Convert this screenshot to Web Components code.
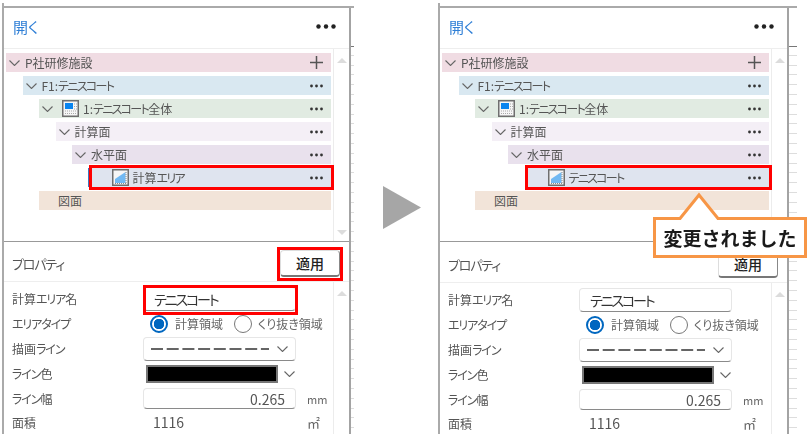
<!DOCTYPE html>
<html lang="ja">
<head>
<meta charset="utf-8">
<title>計算エリア名の変更</title>
<style>
    html, body { margin: 0; padding: 0; background: #fff; }
    body {
        width: 810px;
        height: 445px;
        overflow: hidden;
        font-family: "Noto Sans CJK JP", "Noto Sans", sans-serif;
        font-feature-settings: "palt";
    }
</style>
</head>
<body>
<compare-page>
    <area-pane style="--content-width: 345px; --ruler-width: 3px;">
        <pane-header slot="header"></pane-header>
        <tree-row slot="tree" level="0" label="P社研修施設" bg="#f0dce3" chevron action="plus"></tree-row>
        <tree-row slot="tree" level="1" label="F1:テニスコート" bg="#d9e8f1" chevron action="dots"></tree-row>
        <tree-row slot="tree" level="2" label="1:テニスコート全体" bg="#e1ebe2" chevron icon="plan" action="dots"></tree-row>
        <tree-row slot="tree" level="3" label="計算面" bg="#f4eff6" chevron action="dots"></tree-row>
        <tree-row slot="tree" level="4" label="水平面" bg="#e9e1ed" chevron action="dots"></tree-row>
        <tree-row slot="tree" level="5" label="計算エリア" bg="#dfe4ef" icon="area" action="dots" marked edge></tree-row>
        <tree-row slot="tree" level="2" label="図面" bg="#f2e4d9"></tree-row>
        <props-header slot="prophead" marked></props-header>
        <prop-row slot="props" label="計算エリア名"><text-field value="テニスコート" marked></text-field></prop-row>
        <prop-row slot="props" label="エリアタイプ"><radio-pair first="計算領域" second="くり抜き領域"></radio-pair></prop-row>
        <prop-row slot="props" label="描画ライン"><line-select></line-select></prop-row>
        <prop-row slot="props" label="ライン色"><color-select></color-select></prop-row>
        <prop-row slot="props" label="ライン幅" unit="mm"><text-field value="0.265" align="right" short></text-field></prop-row>
        <prop-row slot="props" label="面積" unit="㎡" last><plain-value>1116</plain-value></prop-row>
    </area-pane>

    <big-arrow></big-arrow>

    <area-pane style="--content-width: 347px; --ruler-width: 8px; --props-shift: 1px;">
        <pane-header slot="header"></pane-header>
        <tree-row slot="tree" level="0" label="P社研修施設" bg="#f0dce3" chevron action="plus"></tree-row>
        <tree-row slot="tree" level="1" label="F1:テニスコート" bg="#d9e8f1" chevron action="dots"></tree-row>
        <tree-row slot="tree" level="2" label="1:テニスコート全体" bg="#e1ebe2" chevron icon="plan" action="dots"></tree-row>
        <tree-row slot="tree" level="3" label="計算面" bg="#f4eff6" chevron action="dots"></tree-row>
        <tree-row slot="tree" level="4" label="水平面" bg="#e9e1ed" chevron action="dots"></tree-row>
        <tree-row slot="tree" level="5" label="テニスコート" bg="#dfe4ef" icon="area" action="dots" marked></tree-row>
        <tree-row slot="tree" level="2" label="図面" bg="#f2e4d9"></tree-row>
        <props-header slot="prophead"></props-header>
        <prop-row slot="props" label="計算エリア名"><text-field value="テニスコート"></text-field></prop-row>
        <prop-row slot="props" label="エリアタイプ"><radio-pair first="計算領域" second="くり抜き領域"></radio-pair></prop-row>
        <prop-row slot="props" label="描画ライン"><line-select></line-select></prop-row>
        <prop-row slot="props" label="ライン色"><color-select></color-select></prop-row>
        <prop-row slot="props" label="ライン幅" unit="mm"><text-field value="0.265" align="right" short></text-field></prop-row>
        <prop-row slot="props" label="面積" unit="㎡" last><plain-value>1116</plain-value></prop-row>
        <change-callout slot="overlay">変更されました</change-callout>
    </area-pane>
</compare-page>

<script>
const chevronSvg = `<svg width="11" height="6" viewBox="0 0 11 6" fill="none" stroke="#666" stroke-width="1.1"><path d="M.5.5l5 5 5-5"/></svg>`;

// the reference font has narrow katakana, so runs of it get tighter spacing
const kana = (text) => text.replace(/[\u30a0-\u30ff]+/g, (run) => `<span class="k">${run}</span>`);

class ComparePage extends HTMLElement {
    connectedCallback() {
        this.attachShadow({ mode: 'open' });
        this.shadowRoot.innerHTML = `
            <style>
                :host { display: flex; align-items: flex-start; padding: 3px 0 0 2px; filter: blur(.3px); }
            </style>
            <slot></slot>
        `;
    }
}

class AreaPane extends HTMLElement {
    connectedCallback() {
        this.attachShadow({ mode: 'open' });
        this.shadowRoot.innerHTML = `
            <style>
                :host {
                    display: block;
                    position: relative;
                    flex: none;
                    box-sizing: border-box;
                    height: 431px;
                    padding-top: 3px;
                    border-left: 2px solid #aaa;
                }
                .wrap { display: flex; height: 100%; border-top: 2px solid #aaa; box-sizing: border-box; }
                .frame {
                    display: flex;
                    flex-direction: column;
                    width: var(--content-width);
                    border-right: 2px solid #a3a3a3;
                }
                .ruler {
                    width: var(--ruler-width);
                    margin-top: 38px;
                    background: repeating-linear-gradient(to bottom, #777 0 1px, transparent 1px 2px) 0 0 / 100% 2px no-repeat,
                        repeating-linear-gradient(to bottom, transparent 0 8.8px, #ddd 8.8px 9.8px);
                }
                .tree { display: flex; height: 193px; box-sizing: border-box; border-bottom: 1px solid #999; }
                .rows { flex: 1; display: flex; flex-direction: column; gap: 4px; padding: 4px 2px 0; min-width: 0; }
                .prophead { margin-top: var(--props-shift, 0); }
                .props { flex: 1; display: flex; min-height: 0; }
                .list { flex: 1; padding-top: 4px; min-width: 0; }
            </style>
            <div class="wrap">
                <div class="frame">
                    <slot name="header"></slot>
                    <div class="tree">
                        <div class="rows"><slot name="tree"></slot></div>
                        <scroll-rail arrows="both"></scroll-rail>
                    </div>
                    <div class="prophead"><slot name="prophead"></slot></div>
                    <div class="props">
                        <div class="list"><slot name="props"></slot></div>
                        <scroll-rail arrows="top"></scroll-rail>
                    </div>
                </div>
                <div class="ruler"></div>
            </div>
            <slot name="overlay"></slot>
        `;
    }
}

class ScrollRail extends HTMLElement {
    connectedCallback() {
        const both = this.getAttribute('arrows') === 'both';
        this.attachShadow({ mode: 'open' });
        this.shadowRoot.innerHTML = `
            <style>
                :host {
                    display: flex;
                    flex: none;
                    flex-direction: column;
                    justify-content: space-between;
                    align-items: center;
                    box-sizing: border-box;
                    width: 16px;
                    padding: 9px 0 6px;
                    border-left: 1px solid #ececec;
                }
                i { display: block; width: 0; height: 0; border: 5px solid transparent; border-top-width: 0; border-bottom: 5px solid #dcdcdc; }
                i.down { transform: rotate(180deg); }
            </style>
            <i></i>${both ? '<i class="down"></i>' : ''}
        `;
    }
}

class PaneHeader extends HTMLElement {
    connectedCallback() {
        this.attachShadow({ mode: 'open' });
        this.shadowRoot.innerHTML = `
            <style>
                :host {
                    display: flex;
                    align-items: center;
                    justify-content: space-between;
                    box-sizing: border-box;
                    height: 41px;
                    padding: 0 13px 4px 9px;
                    border-bottom: 1px solid #eee;
                }
                a { color: #2f7fd6; font-size: 15px; }
            </style>
            <a>開く</a>
            <svg width="20" height="5" viewBox="0 0 20 5" fill="#222"><circle cx="2.5" cy="2.5" r="2.2"/><circle cx="10" cy="2.5" r="2.2"/><circle cx="17.5" cy="2.5" r="2.2"/></svg>
        `;
    }
}

class TreeRow extends HTMLElement {
    connectedCallback() {
        const level = Number(this.getAttribute('level') || 0);
        const label = this.getAttribute('label') || '';
        const bg = this.getAttribute('bg') || '#eee';
        const icon = this.getAttribute('icon');
        const action = this.getAttribute('action');
        const icons = {
            plan: `<svg class="icon" width="17" height="17" viewBox="0 0 17 17"><rect x=".75" y=".75" width="15.5" height="15.5" fill="#f6f6f6" stroke="#6f6f6f" stroke-width="1.5"/><rect x="3" y="3" width="8" height="6" fill="#0a84ef"/><path d="M12 4h3M12 6.5h3M12 9h3M3 11h12M3 13.5h12" stroke="#aaa" stroke-dasharray="1 1"/></svg>`,
            area: `<svg class="icon" width="17" height="17" viewBox="0 0 17 17"><rect x=".75" y=".75" width="15.5" height="15.5" fill="#f6f6f6" stroke="#6f6f6f" stroke-width="1.5"/><path d="M3 14V10L13.5 3V14Z" fill="#72b9f2"/><path d="M3 14.5h11M14 3v11" stroke="#888" stroke-dasharray="1 1"/></svg>`
        };
        const actions = {
            dots: `<svg width="13" height="4" viewBox="0 0 13 4" fill="#333"><circle cx="1.5" cy="2" r="1.4"/><circle cx="6.5" cy="2" r="1.4"/><circle cx="11.5" cy="2" r="1.4"/></svg>`,
            plus: `<svg width="13" height="13" viewBox="0 0 13 13" stroke="#555" stroke-width="1.5"><path d="M6.5 0v13M0 6.5h13"/></svg>`
        };
        this.attachShadow({ mode: 'open' });
        this.shadowRoot.innerHTML = `
            <style>
                :host {
                    display: flex;
                    align-items: center;
                    position: relative;
                    flex: none;
                    height: 19px;
                    margin-left: ${level * 16.5}px;
                    background: ${bg};
                    color: #555;
                    font-size: 12px;
                }
                .chev { flex: none; display: flex; align-items: center; width: 16px; padding-left: 3px; }
                .icon { flex: none; margin: 0 4px; }
                .label { flex: 1; white-space: nowrap; }
                .k { letter-spacing: -.14em; }
                .action { display: flex; margin-right: 8px; }
                :host([edge]) { box-shadow: -1px 0 0 #3f78c0; }
                :host([marked])::after {
                    content: '';
                    position: absolute;
                    inset: -3px -3px -3px 0;
                    border: 3.5px solid #f00;
                }
            </style>
            <span class="chev">${this.hasAttribute('chevron') ? chevronSvg : ''}</span>
            ${icon ? icons[icon] : ''}
            <span class="label">${kana(label)}</span>
            ${action ? `<span class="action">${actions[action]}</span>` : ''}
        `;
    }
}

class PropsHeader extends HTMLElement {
    connectedCallback() {
        this.attachShadow({ mode: 'open' });
        this.shadowRoot.innerHTML = `
            <style>
                :host {
                    display: flex;
                    align-items: center;
                    justify-content: space-between;
                    box-sizing: border-box;
                    height: 40px;
                    padding: 3px 9px 0 8px;
                    border-bottom: 1px solid #eee;
                    color: #555;
                    font-size: 13px;
                }
                span { letter-spacing: -.09em; }
                button {
                    position: relative;
                    width: 60px;
                    height: 27px;
                    padding: 0;
                    background: #fff;
                    border: 1px solid #ddd;
                    border-bottom: 2px solid #777;
                    border-right-color: #888;
                    border-radius: 4px;
                    color: #222;
                    font: 500 14px "Noto Sans CJK JP", sans-serif;
                }
                :host([marked]) button::after {
                    content: '';
                    position: absolute;
                    inset: -4px -4px -6px -4px;
                    border: 3.5px solid #f00;
                }
            </style>
            <span>プロパティ</span>
            <button>適用</button>
        `;
    }
}

class PropRow extends HTMLElement {
    connectedCallback() {
        const unit = this.getAttribute('unit');
        this.attachShadow({ mode: 'open' });
        this.shadowRoot.innerHTML = `
            <style>
                :host { display: flex; align-items: center; height: 25px; color: #555; font-size: 12px; }
                :host([last]) { height: 22px; }
                .label { flex: none; width: 131px; padding-left: 8px; white-space: nowrap; }
                .k { letter-spacing: -.09em; }
                .unit { margin-left: 11px; font-size: ${unit === '㎡' ? 13 : 11}px; color: #666; }
            </style>
            <span class="label">${kana(this.getAttribute('label'))}</span>
            <slot></slot>
            ${unit ? `<span class="unit">${unit}</span>` : ''}
        `;
    }
}

class TextField extends HTMLElement {
    connectedCallback() {
        const right = this.getAttribute('align') === 'right';
        this.attachShadow({ mode: 'open' });
        this.shadowRoot.innerHTML = `
            <style>
                :host {
                    display: flex;
                    align-items: center;
                    justify-content: ${right ? 'flex-end' : 'flex-start'};
                    position: relative;
                    flex: none;
                    box-sizing: border-box;
                    width: 153px;
                    height: 24px;
                    padding: 0 10px;
                    border: 1px solid #e6e6e6;
                    border-bottom: 1.5px solid #8a8a8a;
                    border-radius: 4px;
                    color: #333;
                    font-size: 14px;
                }
                .k { letter-spacing: -.15em; }
                :host([short]) { height: 21px; color: #555; }
                :host([marked])::after {
                    content: '';
                    position: absolute;
                    inset: -3px -3px -5px -1px;
                    border: 3.5px solid #f00;
                }
            </style>
            <span>${kana(this.getAttribute('value'))}</span>
        `;
    }
}

class RadioPair extends HTMLElement {
    connectedCallback() {
        this.attachShadow({ mode: 'open' });
        this.shadowRoot.innerHTML = `
            <style>
                :host { display: flex; align-items: center; padding-left: 7px; color: #666; font-size: 12px; white-space: nowrap; }
                .radio { flex: none; box-sizing: border-box; width: 18px; height: 18px; border: 1.5px solid #777; border-radius: 50%; }
                .radio.on { border: 2px solid #0067c0; background: radial-gradient(circle, #0067c0 0 5px, #fff 5.5px); }
                .text { margin: 0 11px 0 7px; }
            </style>
            <span class="radio on"></span><span class="text">${this.getAttribute('first')}</span>
            <span class="radio"></span><span class="text" style="margin-right:0;margin-left:6px">${this.getAttribute('second')}</span>
        `;
    }
}

class LineSelect extends HTMLElement {
    connectedCallback() {
        this.attachShadow({ mode: 'open' });
        this.shadowRoot.innerHTML = `
            <style>
                :host {
                    display: flex;
                    align-items: center;
                    justify-content: space-between;
                    flex: none;
                    box-sizing: border-box;
                    width: 153px;
                    height: 24px;
                    padding: 0 7px;
                    border: 1px solid #e6e6e6;
                    border-bottom: 1.5px solid #8a8a8a;
                    border-radius: 4px;
                }
            </style>
            <svg width="118" height="2" viewBox="0 0 118 2"><path d="M0 1h118" stroke="#333" stroke-width="1.7" stroke-dasharray="12 3.7"/></svg>
            ${chevronSvg}
        `;
    }
}

class ColorSelect extends HTMLElement {
    connectedCallback() {
        this.attachShadow({ mode: 'open' });
        this.shadowRoot.innerHTML = `
            <style>
                :host { display: flex; align-items: center; flex: none; width: 153px; padding-left: 3px; box-sizing: border-box; }
                .swatch { flex: none; box-sizing: border-box; width: 132px; height: 18px; background: #000; border: 2px solid #777; }
                svg { margin-left: 6px; }
            </style>
            <span class="swatch"></span>
            ${chevronSvg}
        `;
    }
}

class PlainValue extends HTMLElement {
    connectedCallback() {
        this.attachShadow({ mode: 'open' });
        this.shadowRoot.innerHTML = `
            <style>
                :host { display: block; flex: none; box-sizing: border-box; width: 153px; padding-left: 10px; color: #555; font-size: 14px; }
            </style>
            <slot></slot>
        `;
    }
}

class BigArrow extends HTMLElement {
    connectedCallback() {
        this.attachShadow({ mode: 'open' });
        this.shadowRoot.innerHTML = `
            <style>
                :host { display: block; flex: none; margin: 183px 17px 0 29px; line-height: 0; }
            </style>
            <svg width="38" height="43" viewBox="0 0 38 43"><path d="M0 0L38 21.5 0 43Z" fill="#a6a6a6"/></svg>
        `;
    }
}

class ChangeCallout extends HTMLElement {
    connectedCallback() {
        this.attachShadow({ mode: 'open' });
        this.shadowRoot.innerHTML = `
            <style>
                :host { display: block; position: absolute; left: 212px; top: 189px; width: 156px; height: 67px; }
                svg { position: absolute; inset: 0; }
                .text {
                    position: absolute;
                    left: 0;
                    right: 0;
                    top: 27px;
                    height: 37px;
                    display: flex;
                    align-items: center;
                    justify-content: center;
                    font-size: 19px;
                    font-weight: 700;
                    font-feature-settings: normal;
                    color: #1a1a1a;
                }
            </style>
            <svg width="156" height="67" viewBox="0 0 156 67"><path d="M28 26.5L47 3 66 26.5H153.5V64.5H2.5V26.5Z" fill="#fff" stroke="#f79646" stroke-width="3"/></svg>
            <div class="text"><slot></slot></div>
        `;
    }
}

customElements.define('compare-page', ComparePage);
customElements.define('area-pane', AreaPane);
customElements.define('scroll-rail', ScrollRail);
customElements.define('pane-header', PaneHeader);
customElements.define('tree-row', TreeRow);
customElements.define('props-header', PropsHeader);
customElements.define('prop-row', PropRow);
customElements.define('text-field', TextField);
customElements.define('radio-pair', RadioPair);
customElements.define('line-select', LineSelect);
customElements.define('color-select', ColorSelect);
customElements.define('plain-value', PlainValue);
customElements.define('big-arrow', BigArrow);
customElements.define('change-callout', ChangeCallout);
</script>
</body>
</html>
